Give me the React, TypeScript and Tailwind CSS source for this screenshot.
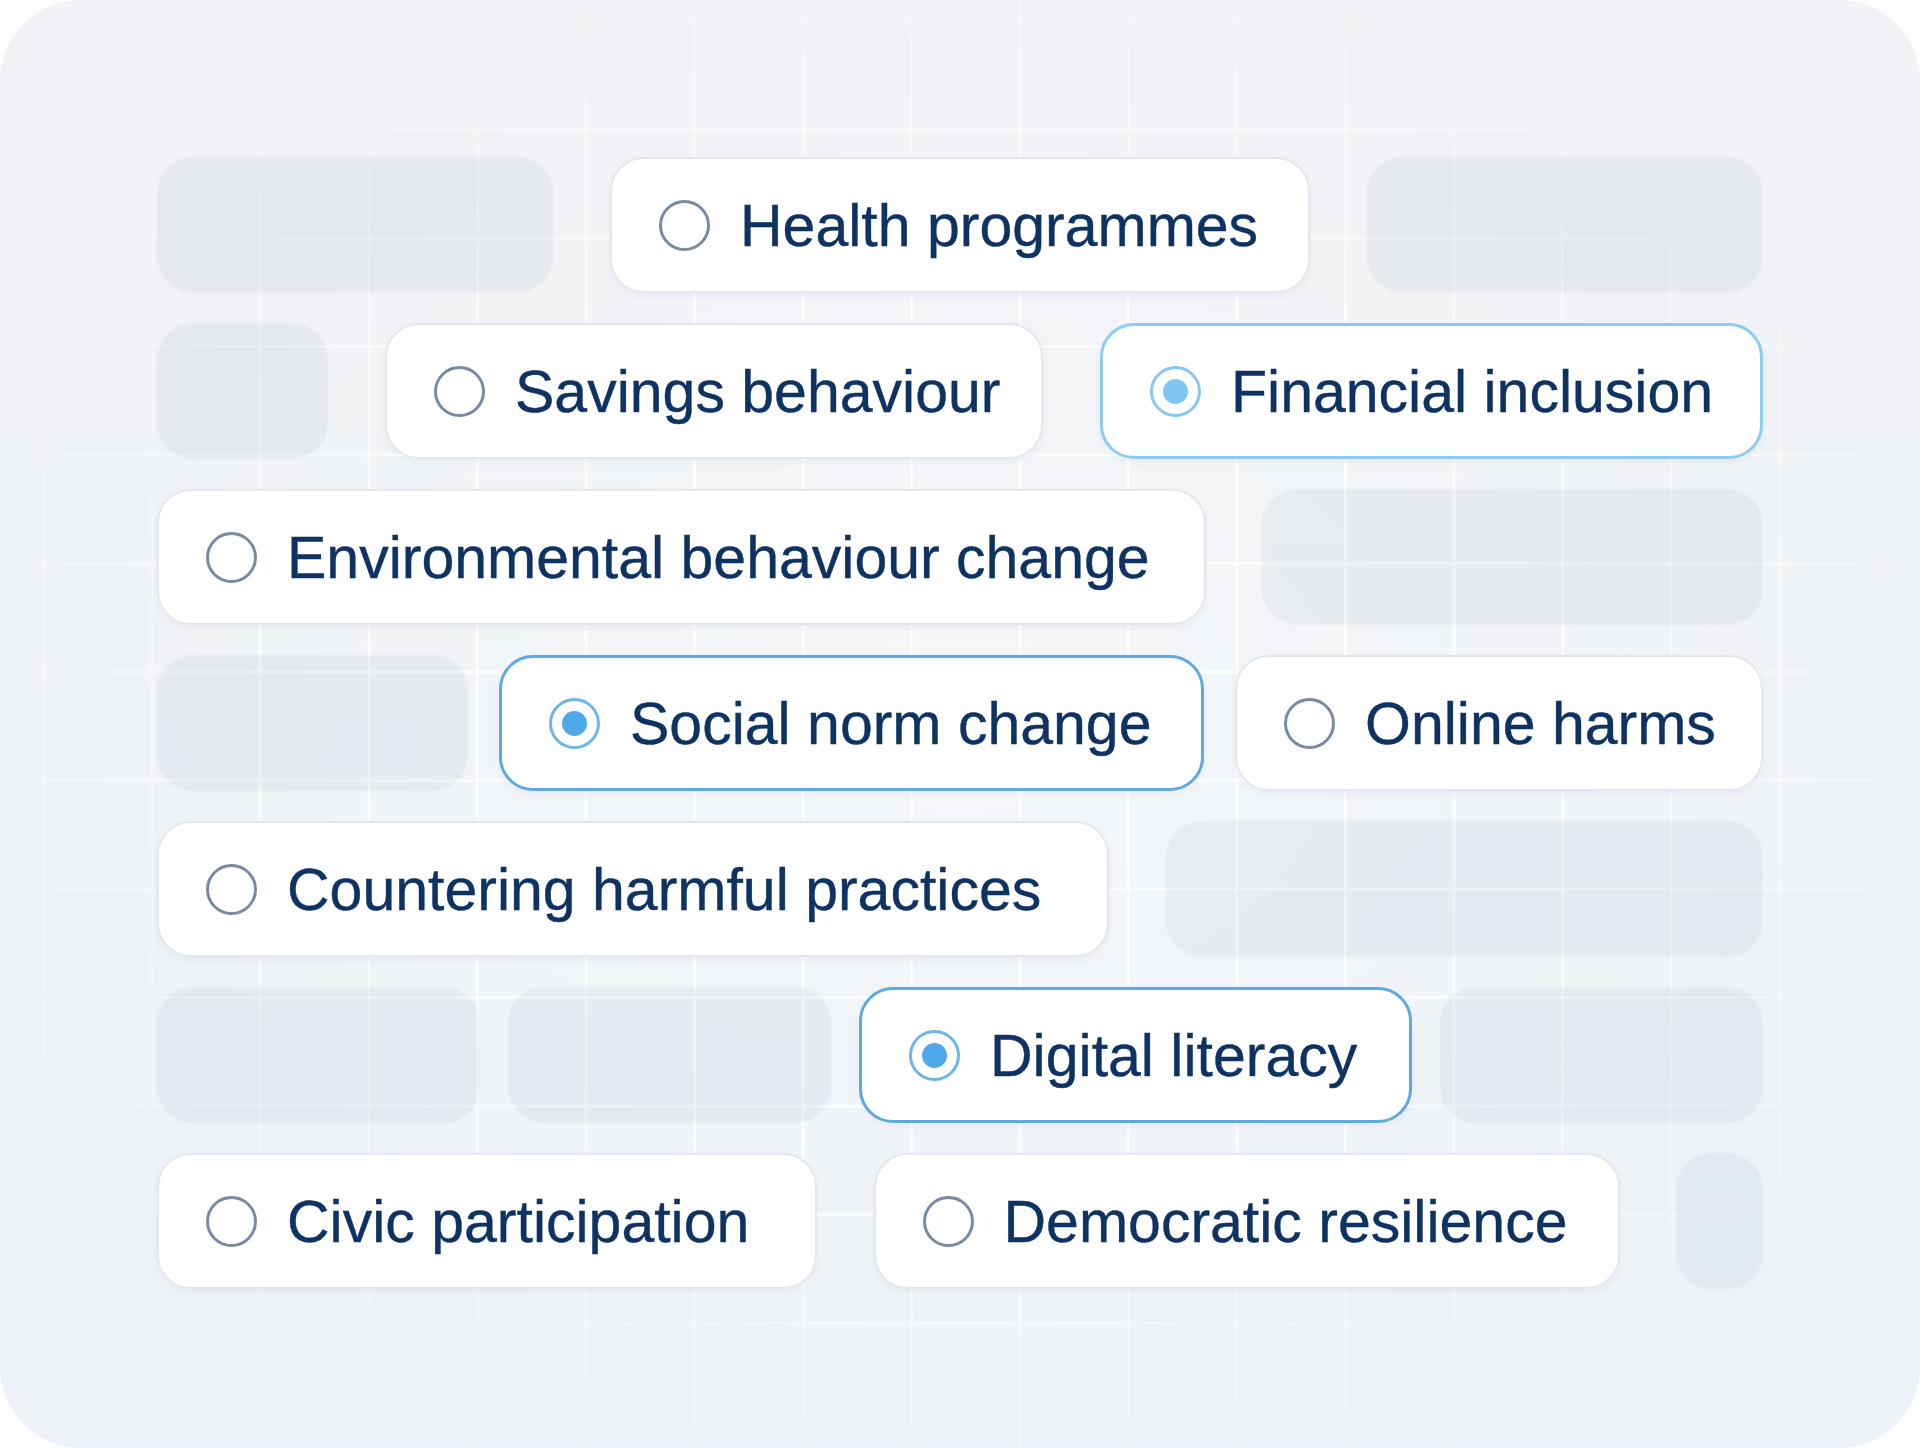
import React from "react";

type Item =
  | { kind: "ph"; w: number }
  | { kind: "chip"; w: number; label: string; sel?: "light" | "strong" };

const rows: Item[][] = [
  [
    { kind: "ph", w: 396 },
    { kind: "chip", w: 700, label: "Health programmes" },
    { kind: "ph", w: 396 },
  ],
  [
    { kind: "ph", w: 171 },
    { kind: "chip", w: 658, label: "Savings behaviour" },
    { kind: "chip", w: 663, label: "Financial inclusion", sel: "light" },
  ],
  [
    { kind: "chip", w: 1049, label: "Environmental behaviour change" },
    { kind: "ph", w: 501 },
  ],
  [
    { kind: "ph", w: 311 },
    { kind: "chip", w: 705, label: "Social norm change", sel: "strong" },
    { kind: "chip", w: 528, label: "Online harms" },
  ],
  [
    { kind: "chip", w: 952, label: "Countering harmful practices" },
    { kind: "ph", w: 597 },
  ],
  [
    { kind: "ph", w: 323 },
    { kind: "ph", w: 323 },
    { kind: "chip", w: 553, label: "Digital literacy", sel: "strong" },
    { kind: "ph", w: 323 },
  ],
  [
    { kind: "chip", w: 660, label: "Civic participation" },
    { kind: "chip", w: 746, label: "Democratic resilience" },
    { kind: "ph", w: 87 },
  ],
];

function Radio({ sel }: { sel?: "light" | "strong" }) {
  if (!sel) {
    return (
      <span className="flex h-[51px] w-[51px] shrink-0 rounded-full border-[3px] border-[#7a8aa1]" />
    );
  }
  const light = sel === "light";
  return (
    <span
      className={
        light
          ? "flex h-[51px] w-[51px] shrink-0 items-center justify-center rounded-full border-[3px] border-[#86c8f0]"
          : "flex h-[51px] w-[51px] shrink-0 items-center justify-center rounded-full border-[3px] border-[#6db6e6]"
      }
    >
      <span
        className={
          light
            ? "h-[25px] w-[25px] rounded-full bg-[#7cc6f4]"
            : "h-[25px] w-[25px] rounded-full bg-[#4ea8ea]"
        }
      />
    </span>
  );
}

function Chip({ item }: { item: Extract<Item, { kind: "chip" }> }) {
  const border = !item.sel
    ? "border-2 border-[#e4e8ee]"
    : item.sel === "light"
    ? "border-[3px] border-[#8ecbf1]"
    : "border-[3px] border-[#5fa9df]";
  return (
    <div
      className={`flex h-[136px] shrink-0 items-center gap-[30px] rounded-[34px] bg-white pl-[47px] shadow-[0_3px_8px_rgba(20,45,90,0.05)] ${border}`}
      style={{ width: item.w }}
    >
      <Radio sel={item.sel} />
      <span className="whitespace-nowrap pt-[3px] font-['Liberation_Sans',Arial,sans-serif] text-[59px] leading-none text-[#0e3261] [-webkit-text-stroke:0.4px_#0e3261]">
        {item.label}
      </span>
    </div>
  );
}

function Placeholder({ w }: { w: number }) {
  return (
    <div
      className="h-[136px] shrink-0 rounded-[36px] bg-[rgba(25,55,105,0.05)] blur-[1px]"
      style={{ width: w }}
    />
  );
}

export default function App() {
  return (
    <div className="min-h-[1448px] w-full bg-white">
      <div className="relative h-[1448px] w-full overflow-hidden rounded-[80px] bg-[linear-gradient(180deg,#f2f3f6_0%,#f0f3f7_50%,#eef3f9_100%)]">
        <div className="pointer-events-none absolute inset-0 bg-[linear-gradient(to_right,rgba(255,255,255,0.7)_0px,rgba(255,255,255,0.7)_3px,transparent_3px),linear-gradient(to_bottom,rgba(255,255,255,0.7)_0px,rgba(255,255,255,0.7)_3px,transparent_3px)] bg-[size:108.5px_108.5px] bg-[position:42px_128px] [mask-image:radial-gradient(ellipse_at_center,black_45%,transparent_85%)]" />
        <div className="pointer-events-none absolute inset-0 bg-[radial-gradient(ellipse_at_center,rgba(255,255,255,0.35)_0%,transparent_70%)]" />
        <div className="relative flex flex-col gap-[30px] px-[157px] pt-[157px]">
          {rows.map((row, i) => (
            <div key={i} className="flex items-center justify-between">
              {row.map((item, j) =>
                item.kind === "ph" ? (
                  <Placeholder key={j} w={item.w} />
                ) : (
                  <Chip key={j} item={item} />
                )
              )}
            </div>
          ))}
        </div>
      </div>
    </div>
  );
}
